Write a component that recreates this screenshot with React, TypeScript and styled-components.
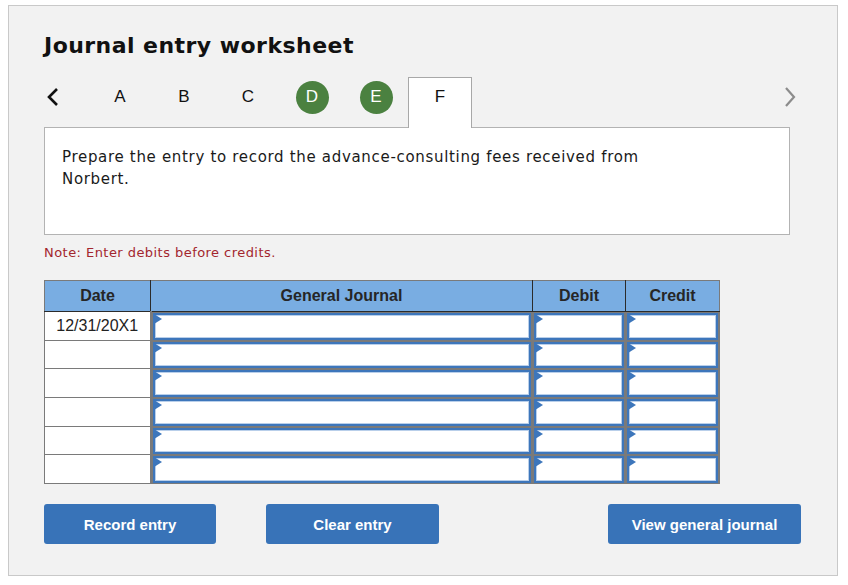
import React from "react";
import styled, { createGlobalStyle } from "styled-components";

const Global = createGlobalStyle`
  html, body { margin: 0; padding: 0; background: #ffffff; }
  * { box-sizing: border-box; }
`;

const Panel = styled.div`
  margin: 5px 0 0 8px;
  width: 830px;
  height: 571px;
  border: 1px solid #c9c9c9;
  background: #f2f2f2;
  padding: 24px 0 0 35px;
`;

const Title = styled.h1`
  margin: 0;
  font-family: "DejaVu Sans", Verdana, sans-serif;
  font-weight: bold;
  font-size: 22px;
  letter-spacing: 0.45px;
  line-height: 32px;
  color: #111;
`;

const TabRow = styled.div`
  display: flex;
  align-items: flex-end;
  height: 50px;
  margin-top: 15px;
  width: 753px;
`;

const Chevron = styled.div<{ $end?: boolean }>`
  width: 44px;
  height: 50px;
  padding-bottom: 11px;
  display: flex;
  align-items: center;
  justify-content: ${(p) => (p.$end ? "flex-end" : "flex-start")};
  padding-left: ${(p) => (p.$end ? "0" : "2px")};
  margin-left: ${(p) => (p.$end ? "auto" : "0")};
`;

const Tab = styled.div<{ $active?: boolean }>`
  width: 64px;
  height: ${(p) => (p.$active ? "51px" : "50px")};
  padding-bottom: ${(p) => (p.$active ? "12px" : "11px")};
  display: flex;
  align-items: center;
  justify-content: center;
  font-family: "Liberation Sans", Arial, sans-serif;
  font-size: 17px;
  color: #111;
  background: ${(p) => (p.$active ? "#ffffff" : "transparent")};
  border: ${(p) => (p.$active ? "1px solid #a8a8a8" : "1px solid transparent")};
  border-bottom: none;
  margin-bottom: ${(p) => (p.$active ? "-1px" : "0")};
  position: relative;
  z-index: 1;
`;

const Done = styled.span`
  width: 33px;
  height: 33px;
  border-radius: 50%;
  background: #4b8140;
  color: #fff;
  display: flex;
  align-items: center;
  justify-content: center;
  font-size: 17px;
`;

const Prompt = styled.div`
  width: 746px;
  height: 108px;
  background: #fff;
  border: 1px solid #b3b3b3;
  padding: 18px 17px;
  font-family: "DejaVu Sans", Verdana, sans-serif;
  font-size: 15px;
  letter-spacing: 0.68px;
  line-height: 22px;
  color: #1a1a1a;
`;

const PromptText = styled.p`
  margin: 0;
  width: 620px;
`;

const Note = styled.div`
  margin-top: 10px;
  font-family: "DejaVu Sans", Verdana, sans-serif;
  font-size: 13px;
  letter-spacing: 0.45px;
  line-height: 16px;
  color: #a3262e;
`;

const Table = styled.table`
  margin-top: 19px;
  border-collapse: collapse;
  table-layout: fixed;
  width: 676px;
  border: 1px solid #7a7a7a;
  font-family: "Liberation Sans", Arial, sans-serif;
`;

const Th = styled.th<{ $w: number }>`
  width: ${(p) => p.$w}px;
  height: 31px;
  background: #79ade2;
  border: 1px solid #2b2b2b;
  border-top-color: #7a7a7a;
  font-size: 16px;
  font-weight: bold;
  color: #262626;
  padding: 0;
  &:first-child { border-left-color: #7a7a7a; }
  &:last-child { border-right-color: #7a7a7a; }
`;

const DateCell = styled.td`
  height: 28.7px;
  background: #fff;
  border: 1px solid #7a7a7a;
  border-right: 2px solid #7a7a7a;
  font-size: 16px;
  color: #222;
  text-align: center;
  padding: 0;
`;

const InputCell = styled.td`
  height: 28.7px;
  border: 1px solid #7a7a7a;
  background: #7a7a7a;
  padding: 1px 1px 0 1px;
  vertical-align: top;
`;

const Field = styled.div`
  position: relative;
  height: 26.7px;
  background: #fff;
  border: 2px solid #3d76bb;
  box-shadow: inset 0 0 0 1px #b9cfea;
`;

const Flag = styled.span`
  position: absolute;
  left: -1px;
  top: -1px;
  width: 0;
  height: 0;
  border-top: 5px solid transparent;
  border-bottom: 5px solid transparent;
  border-left: 8px solid #3d76bb;
`;

const ButtonRow = styled.div`
  display: flex;
  margin-top: 20px;
  width: 757px;
`;

const Button = styled.button<{ $w: number; $push?: number }>`
  width: ${(p) => p.$w}px;
  height: 40px;
  margin-left: ${(p) => p.$push ?? 0}px;
  background: #3873b8;
  color: #fff;
  border: none;
  border-radius: 3px;
  font-family: "Liberation Sans", Arial, sans-serif;
  font-weight: bold;
  font-size: 15px;
  padding: 0;
`;

const rows = ["12/31/20X1", "", "", "", "", ""];

function Input() {
  return (
    <InputCell>
      <Field>
        <Flag />
      </Field>
    </InputCell>
  );
}

export default function App() {
  return (
    <>
      <Global />
      <Panel>
        <Title>Journal entry worksheet</Title>
        <TabRow>
          <Chevron>
            <svg width="14" height="20" viewBox="0 0 14 20">
              <path d="M11 2 L3 10 L11 18" fill="none" stroke="#111" strokeWidth="2.6" />
            </svg>
          </Chevron>
          <Tab>A</Tab>
          <Tab>B</Tab>
          <Tab>C</Tab>
          <Tab><Done>D</Done></Tab>
          <Tab><Done>E</Done></Tab>
          <Tab $active>F</Tab>
          <Chevron $end>
            <svg width="14" height="22" viewBox="0 0 14 22">
              <path d="M3 2 L11 11 L3 20" fill="none" stroke="#8c8c8c" strokeWidth="2.2" />
            </svg>
          </Chevron>
        </TabRow>
        <Prompt>
          <PromptText>
            Prepare the entry to record the advance-consulting fees received from Norbert.
          </PromptText>
        </Prompt>
        <Note>Note: Enter debits before credits.</Note>
        <Table>
          <thead>
            <tr>
              <Th $w={106}>Date</Th>
              <Th $w={382}>General Journal</Th>
              <Th $w={93}>Debit</Th>
              <Th $w={94}>Credit</Th>
            </tr>
          </thead>
          <tbody>
            {rows.map((d, i) => (
              <tr key={i}>
                <DateCell>{d}</DateCell>
                <Input />
                <Input />
                <Input />
              </tr>
            ))}
          </tbody>
        </Table>
        <ButtonRow>
          <Button $w={172}>Record entry</Button>
          <Button $w={173} $push={50}>Clear entry</Button>
          <Button $w={193} $push={169}>View general journal</Button>
        </ButtonRow>
      </Panel>
    </>
  );
}
